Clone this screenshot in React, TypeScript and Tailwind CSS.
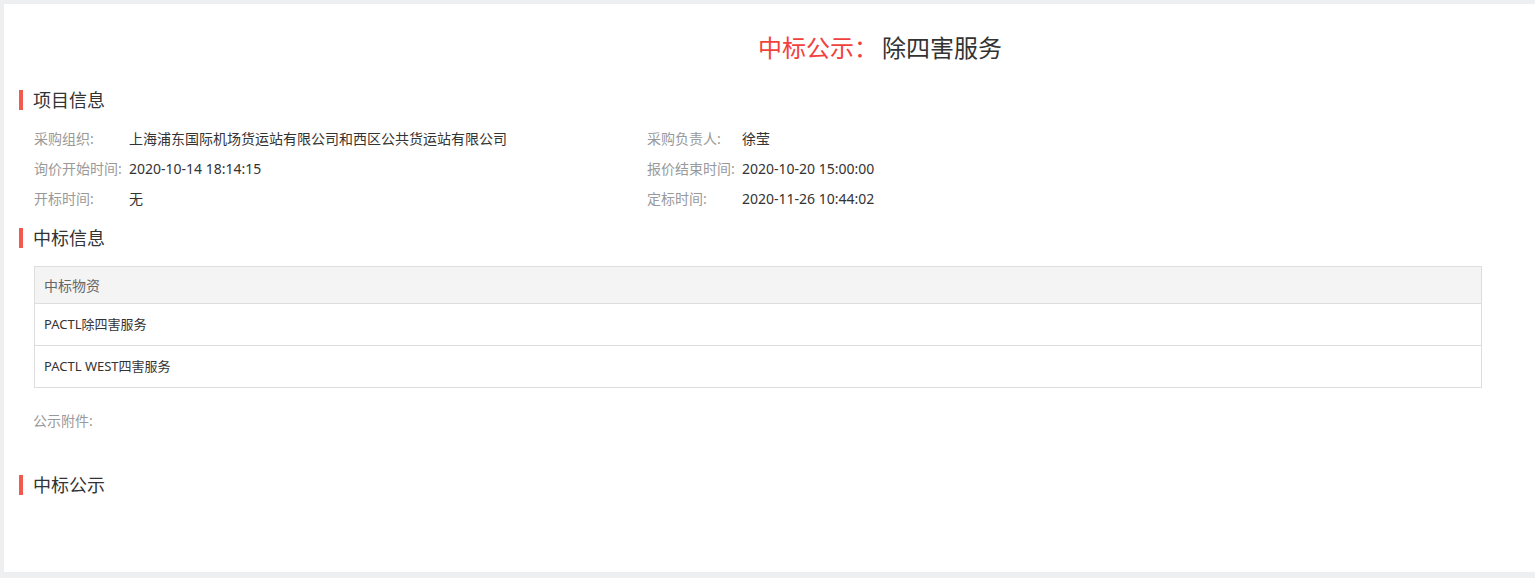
import React from "react";

const FONT = { fontFamily: '"Noto Sans", "Noto Sans CJK SC", sans-serif' };

function SectionHeader({ title }: { title: string }) {
  return (
    <div className="flex h-[20px] items-center pl-[15px]">
      <div className="h-[20px] w-[4px] bg-[#f25a4e]" />
      <div className="ml-[10px] text-[18px] leading-[20px] text-[#333]">{title}</div>
    </div>
  );
}

function InfoItem({ label, value }: { label: string; value: string }) {
  return (
    <div className="flex h-[30px] items-center text-[14px]">
      <div className="w-[95px] shrink-0 text-[#999]">{label}</div>
      <div className="text-[#333]">{value}</div>
    </div>
  );
}

export default function App() {
  return (
    <div className="min-h-[578px] bg-[#eeeff1] pl-[4px] pt-[4px] pb-[6px]" style={FONT}>
      <div className="h-[568px] bg-white">
        <div className="flex h-[60px] items-end pl-[754px]">
          <div className="text-[24px] leading-[32px]">
            <span className="text-[#f2413d]">中标公示：</span>
            <span className="ml-[4px] text-[#333]">除四害服务</span>
          </div>
        </div>

        <div className="pt-[26px]">
          <SectionHeader title="项目信息" />
        </div>

        <div className="mt-[13px] grid grid-cols-[613px_1fr] pl-[30px]">
          <InfoItem label="采购组织:" value="上海浦东国际机场货运站有限公司和西区公共货运站有限公司" />
          <InfoItem label="采购负责人:" value="徐莹" />
          <InfoItem label="询价开始时间:" value="2020-10-14 18:14:15" />
          <InfoItem label="报价结束时间:" value="2020-10-20 15:00:00" />
          <InfoItem label="开标时间:" value="无" />
          <InfoItem label="定标时间:" value="2020-11-26 10:44:02" />
        </div>

        <div className="mt-[15px]">
          <SectionHeader title="中标信息" />
        </div>

        <div className="ml-[30px] mt-[18px] w-[1448px] border border-[#dddddd]">
          <div className="flex h-[37px] items-center border-b border-[#dddddd] bg-[#f4f4f4] pl-[9px] text-[14px] text-[#666]">
            中标物资
          </div>
          <div className="flex h-[42px] items-center border-b border-[#dddddd] pl-[9px] text-[13px] text-[#333]">
            PACTL除四害服务
          </div>
          <div className="flex h-[41px] items-center pl-[9px] text-[13px] text-[#333]">
            PACTL WEST四害服务
          </div>
        </div>

        <div className="mt-[17px] flex h-[30px] items-center pl-[29px] text-[14px] text-[#999]">
          公示附件:
        </div>

        <div className="mt-[40px]">
          <SectionHeader title="中标公示" />
        </div>
      </div>
    </div>
  );
}
